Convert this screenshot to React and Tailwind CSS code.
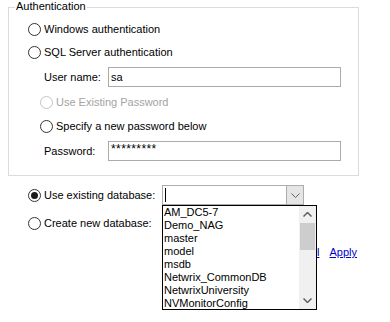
import React from 'react';

function Radio({ checked, disabled }) {
  return (
    <span
      className={`flex items-center justify-center w-[13px] h-[13px] rounded-full border bg-white shrink-0 ${
        disabled ? 'border-[#c4c4c4]' : 'border-[#333333]'
      }`}
    >
      {checked && <span className="w-[7px] h-[7px] rounded-full bg-[#1a1a1a]" />}
    </span>
  );
}

function RadioRow({ label, checked, disabled, className }) {
  return (
    <div className={`flex items-center h-[20px] ${className}`}>
      <Radio checked={checked} disabled={disabled} />
      <span className={`ml-[3px] whitespace-nowrap ${disabled ? 'text-[#a3a3a3]' : 'text-black'}`}>{label}</span>
    </div>
  );
}

const databases = [
  'AM_DC5-7',
  'Demo_NAG',
  'master',
  'model',
  'msdb',
  'Netwrix_CommonDB',
  'NetwrixUniversity',
  'NVMonitorConfig',
];

export default function App() {
  return (
    <div
      className="relative w-[390px] h-[322px] bg-white text-[11px] leading-[14px] text-black overflow-hidden"
      style={{ fontFamily: '"Liberation Sans", Arial, sans-serif' }}
    >
      <div className="pt-[7px] pl-[8px]">
        <div className="relative w-[351px] h-[169px] border border-[#dcdcdc]">
          <span className="absolute -top-[8px] left-[6px] bg-white px-[1px] leading-[13px] whitespace-nowrap">
            Authentication
          </span>

          <div className="pt-[11px] pl-[19px]">
            <RadioRow label="Windows authentication" />
            <RadioRow label="SQL Server authentication" className="mt-[3px]" />

            <div className="flex items-center mt-[5px] pl-[16px]">
              <span className="w-[64px] whitespace-nowrap">User name:</span>
              <div className="w-[233px] h-[20px] border border-[#ababab] flex items-center pl-[2px]">sa</div>
            </div>

            <div className="pl-[12px]">
              <RadioRow label="Use Existing Password" disabled className="mt-[5px]" />
              <RadioRow label="Specify a new password below" className="mt-[4px]" />
            </div>

            <div className="flex items-center mt-[5px] pl-[16px]">
              <span className="w-[64px] whitespace-nowrap">Password:</span>
              <div className="w-[233px] h-[20px] border border-[#ababab] pl-[2px] pt-[1px] text-[12px] leading-[12px] tracking-[0.4px]">
                *********
              </div>
            </div>
          </div>
        </div>
      </div>

      <div className="pl-[28px]">
        <div className="flex items-center mt-[9px] h-[20px]">
          <Radio checked />
          <span className="ml-[3px] w-[118px] whitespace-nowrap">Use existing database:</span>
          <div className="flex w-[142px] h-[20px] border border-[#adadad]">
            <div className="flex-1 flex items-center pl-[2px]">
              <span className="w-px h-[14px] bg-black" />
            </div>
            <div className="w-[17px] h-full bg-[#e5e5e5] border-l border-[#adadad] flex items-center justify-center">
              <svg width="9" height="5" viewBox="0 0 9 5" fill="none">
                <path d="M0.5 0.5 L4.5 4.5 L8.5 0.5" stroke="#606060" strokeWidth="1" />
              </svg>
            </div>
          </div>
        </div>
        <RadioRow label="Create new database:" className="mt-[8px]" />
      </div>

      <div className="flex justify-end gap-[10px] pr-[33px] mt-[12px] text-[#0000cc]">
        <span className="underline">Cancel</span>
        <span className="underline">Apply</span>
      </div>

      <div className="absolute left-[162px] top-[205px] w-[155px] h-[105px] border border-black bg-white flex">
        <div className="flex-1 pl-[1px] leading-[13px] overflow-hidden">
          {databases.map((d) => (
            <div key={d} className="h-[13px] whitespace-nowrap">
              {d}
            </div>
          ))}
        </div>
        <div className="w-[17px] h-full bg-[#f0f0f0] flex flex-col">
          <div className="h-[17px] flex items-center justify-center">
            <svg width="9" height="5" viewBox="0 0 9 5" fill="none">
              <path d="M0.5 4.5 L4.5 0.5 L8.5 4.5" stroke="#606060" strokeWidth="1.5" />
            </svg>
          </div>
          <div className="h-[27px] bg-[#cdcdcd] mx-[1px]" />
          <div className="flex-1" />
          <div className="h-[17px] flex items-center justify-center">
            <svg width="9" height="5" viewBox="0 0 9 5" fill="none">
              <path d="M0.5 0.5 L4.5 4.5 L8.5 0.5" stroke="#606060" strokeWidth="1.5" />
            </svg>
          </div>
        </div>
      </div>
    </div>
  );
}
